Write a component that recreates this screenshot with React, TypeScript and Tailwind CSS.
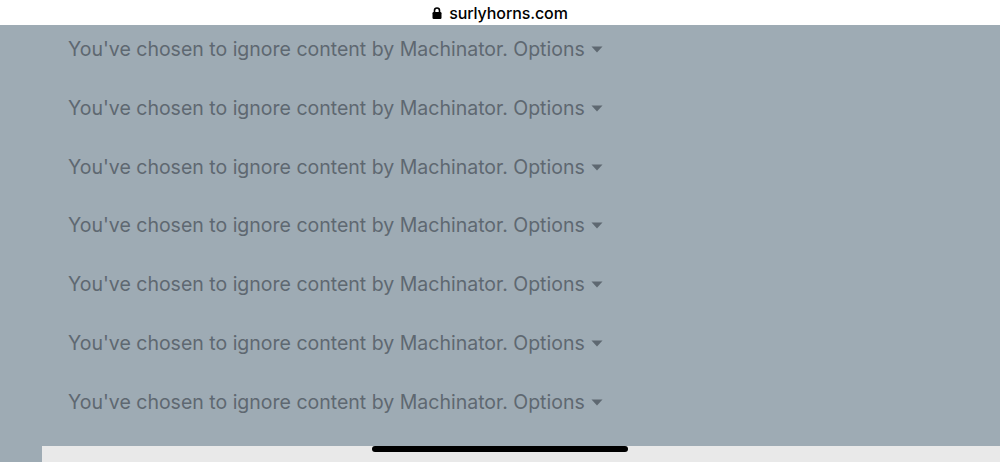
export default function App() {
  const rows = Array.from({ length: 7 });

  return (
    <div className="relative flex h-[462px] w-[1000px] flex-col overflow-hidden bg-[#9eabb4] font-['Inter',sans-serif]">
      <div className="flex h-[25px] shrink-0 items-center justify-center gap-[5px] bg-white text-[16px] font-medium text-black">
        <svg width="10" height="12" viewBox="0 0 10 12" className="mt-[1px]">
          <path d="M2.5 5V3.5a2.5 2.5 0 0 1 5 0V5" fill="none" stroke="#000" strokeWidth="1.6" />
          <rect x="0.5" y="5" width="9" height="7" rx="1.2" fill="#000" />
        </svg>
        <span className="ml-[2px] tracking-[-0.1px]">surlyhorns.com</span>
      </div>

      <div className="flex flex-1 flex-col gap-[34.8px] pl-[68px] pt-[12px]">
        {rows.map((_, i) => (
          <div key={i} className="flex h-[24px] items-center text-[19.5px] leading-[24px] text-[#5e6871]">
            <span>You've chosen to ignore content by Machinator. Options</span>
            <svg width="12" height="7" viewBox="0 0 12 7" className="ml-[6px] mt-[1px]">
              <path d="M0.5 0.5h11L6 6.5z" fill="#5e6871" />
            </svg>
          </div>
        ))}
      </div>

      <div className="flex h-[16px] shrink-0">
        <div className="w-[42px] bg-[#9eabb4]" />
        <div className="flex-1 bg-[#e9e9e9]" />
      </div>

      <div className="absolute left-[372px] top-[446px] h-[6px] w-[256px] rounded-full bg-black" />
    </div>
  );
}
